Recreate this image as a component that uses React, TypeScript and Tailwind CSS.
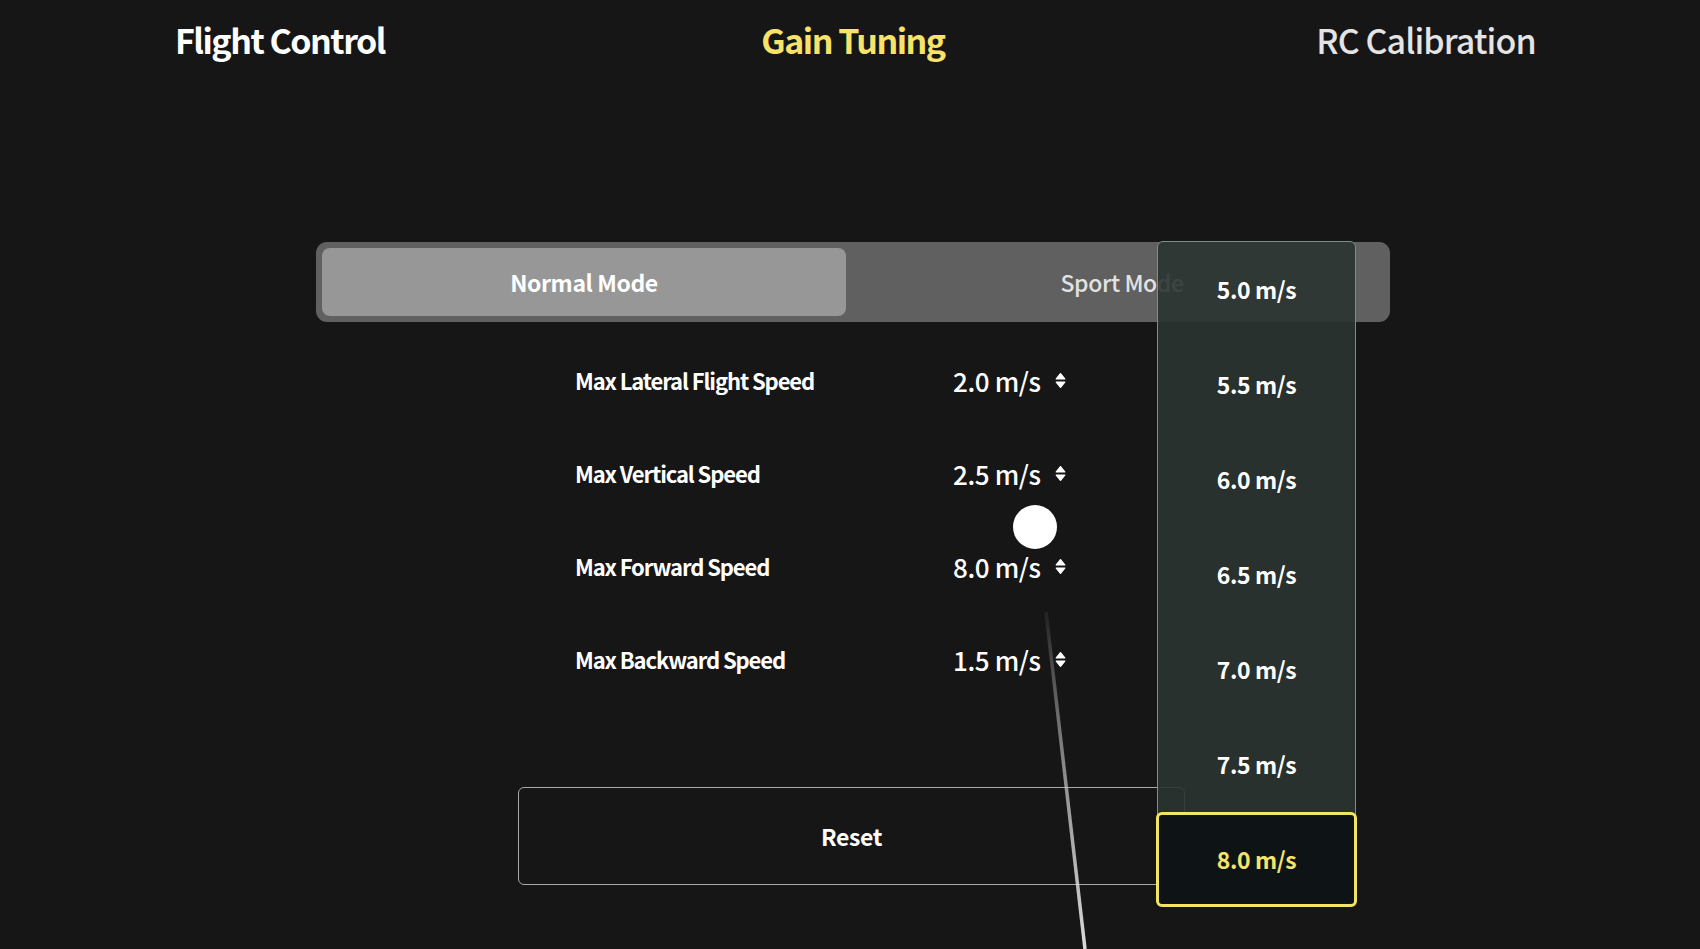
import React from "react";

const tabs = [
  { label: "Flight Control", className: "text-white font-bold tracking-[-1.5px]" },
  { label: "Gain Tuning", className: "text-[#f8e36a] font-bold tracking-[-1.5px]" },
  { label: "RC Calibration", className: "text-[#e4e4e4] font-medium tracking-[-0.9px]" },
];

const speeds = [
  { label: "Max Lateral Flight Speed", value: "2.0 m/s" },
  { label: "Max Vertical Speed", value: "2.5 m/s" },
  { label: "Max Forward Speed", value: "8.0 m/s" },
  { label: "Max Backward Speed", value: "1.5 m/s" },
];

const options = ["5.0 m/s", "5.5 m/s", "6.0 m/s", "6.5 m/s", "7.0 m/s", "7.5 m/s", "8.0 m/s"];

const StepperIcon = () => (
  <svg viewBox="0 0 10 16" className="w-[11px] h-[17px]" fill="currentColor">
    <path d="M5 1.5 L9 6.5 H1 Z" strokeLinejoin="round" stroke="currentColor" strokeWidth="1.2" />
    <path d="M5 14.5 L9 9.5 H1 Z" strokeLinejoin="round" stroke="currentColor" strokeWidth="1.2" />
  </svg>
);

export default function App() {
  return (
    <div className="relative h-[949px] w-full overflow-hidden bg-[#161616] text-white font-['Noto_Sans_CJK_SC','Noto_Sans',sans-serif]">
      <nav className="flex h-[80px] items-center gap-[273px] pl-[130px]">
        {tabs.map((tab) => (
          <div key={tab.label} className={`w-[300px] text-center text-[34px] leading-none ${tab.className}`}>
            {tab.label}
          </div>
        ))}
      </nav>

      <div className="ml-[316px] mt-[162px] flex h-[80px] w-[1074px] rounded-[11px] bg-[#606060] p-[6px]">
        <div className="flex w-[524px] items-center justify-center rounded-[8px] bg-[#979797] text-[23px] font-bold tracking-[-0.4px]">
          Normal Mode
        </div>
        <div className="flex flex-1 items-center justify-center pl-[14px] text-[23px] font-medium tracking-[-0.4px] text-[#e2e2e2]">
          Sport Mode
        </div>
      </div>

      <ul className="ml-[575px] mt-[12px] w-[500px]">
        {speeds.map((row) => (
          <li key={row.label} className="flex h-[93px] items-center">
            <span className="w-[378px] text-[22px] font-bold tracking-[-1.1px]">{row.label}</span>
            <span className="text-[26px] font-medium tracking-[-0.4px]">{row.value}</span>
            <span className="ml-[14px] text-white">
              <StepperIcon />
            </span>
          </li>
        ))}
      </ul>

      <button className="ml-[518px] mt-[81px] flex h-[98px] w-[667px] items-center justify-center rounded-[6px] border-[1.5px] border-[#a8a8a8] text-[23px] font-bold tracking-[-0.4px] text-white">
        Reset
      </button>

      {/* drag cursor */}
      <div className="absolute left-[1013px] top-[505px] size-[44px] rounded-full bg-white" />
      <svg className="absolute left-0 top-0 h-[949px] w-[1700px] pointer-events-none">
        <defs>
          <linearGradient id="trail" x1="0" y1="0" x2="0" y2="1">
            <stop offset="0" stopColor="#ffffff" stopOpacity="0.05" />
            <stop offset="0.55" stopColor="#cfcfcf" stopOpacity="0.7" />
            <stop offset="1" stopColor="#e6e6e6" stopOpacity="0.95" />
          </linearGradient>
        </defs>
        <path d="M1046 612 L1085 949" stroke="url(#trail)" strokeWidth="3.5" fill="none" />
      </svg>

      {/* speed picker */}
      <div className="absolute left-[1157px] top-[241px] w-[199px] rounded-[6px] border border-[#7f8d88] bg-[#2a3430]/90">
        {options.map((opt, i) =>
          i === options.length - 1 ? (
            <div
              key={opt}
              className="-mx-[2px] -mb-[2px] flex h-[95px] items-center justify-center rounded-[6px] border-[3px] border-[#f3e466] bg-[#0e1415] text-[23px] font-bold tracking-[-0.4px] text-[#f5e36a]"
            >
              {opt}
            </div>
          ) : (
            <div key={opt} className="flex h-[95px] items-center justify-center text-[23px] font-bold tracking-[-0.4px]">
              {opt}
            </div>
          )
        )}
      </div>
    </div>
  );
}
